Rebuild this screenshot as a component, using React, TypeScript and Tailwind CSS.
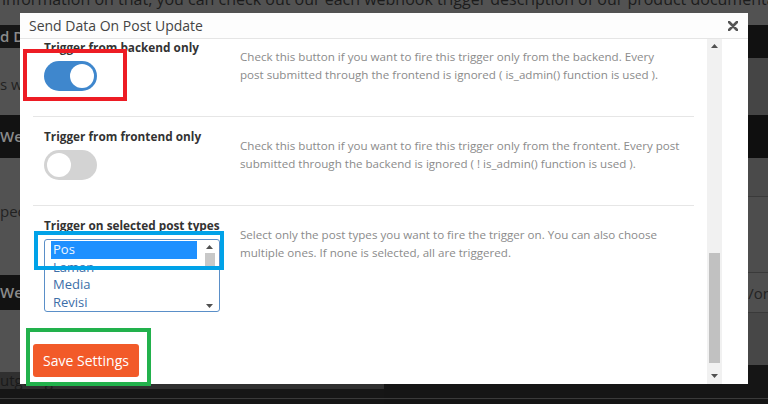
import React from "react";

const settings = [
  {
    id: "backend",
    label: "Trigger from backend only",
    on: true,
    lines: [
      "Check this button if you want to fire this trigger only from the backend. Every",
      "post submitted through the frontend is ignored ( is_admin() function is used ).",
    ],
  },
  {
    id: "frontend",
    label: "Trigger from frontend only",
    on: false,
    lines: [
      "Check this button if you want to fire this trigger only from the frontent. Every post",
      "submitted through the backend is ignored ( ! is_admin() function is used ).",
    ],
  },
];

const postTypes = ["Pos", "Laman", "Media", "Revisi"];

function Toggle({ on }: { on: boolean }) {
  return (
    <div
      className={`mt-[6px] flex h-[30px] w-[53px] items-center rounded-full p-[3px] ${
        on ? "justify-end bg-[#3f87cd]" : "justify-start bg-[#d3d3d3]"
      }`}
    >
      <div className="h-[24px] w-[24px] rounded-full bg-white" />
    </div>
  );
}

function ArrowUp({ className = "" }: { className?: string }) {
  return (
    <svg width="7" height="4" viewBox="0 0 7 4" className={className}>
      <path d="M0 4 L3.5 0 L7 4 Z" fill="#505050" />
    </svg>
  );
}

function ArrowDown({ className = "" }: { className?: string }) {
  return (
    <svg width="7" height="4" viewBox="0 0 7 4" className={className}>
      <path d="M0 0 L7 0 L3.5 4 Z" fill="#505050" />
    </svg>
  );
}

function Backdrop() {
  return (
    <div className="flex h-full flex-col">
      <div className="h-[25px] overflow-hidden whitespace-nowrap pl-[2px] text-[16px] leading-[16px] text-[#1c1c1c]">
        <div className="-mt-[9px]">
          information on that, you can check out our each webhook trigger description of our product
          documentation by clicking <span className="text-[#1d3d5c]">here</span>
        </div>
      </div>
      <div className="flex flex-1">
        <div className="flex w-1/2 flex-col whitespace-nowrap text-[15px]">
          <div className="flex h-[23px] items-center bg-[#161616] font-semibold text-[#8a8a8a]">
            d Data On Post Update
          </div>
          <div className="flex h-[67px] items-end pb-[20px] text-[#222]">s webhooks</div>
          <div className="flex h-[43px] items-center bg-[#121212] font-semibold text-[#8a8a8a]">
            Webhooks
          </div>
          <div className="flex h-[117px] items-start pt-[42px] text-[#222]">pecific</div>
          <div className="flex h-[35px] items-center bg-[#121212] font-semibold text-[#8a8a8a]">
            Webhooks
          </div>
          <div className="h-[62px]" />
          <div className="flex h-[17px] items-center bg-[#303030] text-[#1a1a1a]">utgoing</div>
          <div className="flex flex-1 flex-col bg-[#161616]">
            <div className="h-[9px]" />
            <div className="h-px bg-[#3a3a3a]" />
          </div>
        </div>
        <div className="flex w-1/2 flex-col">
          <div className="h-[33px] bg-[#111]" />
          <div className="h-[57px] bg-[#454545]" />
          <div className="h-[43px] bg-[#0f0f0f]" />
          <div className="h-[39px] border-b border-[#3a3a3a] bg-[#4a4a4a]" />
          <div className="h-[76px] border-b border-[#3a3a3a] bg-[#4d4d4d]" />
          <div className="flex h-[40px] items-end justify-end border-b border-[#3a3a3a] bg-[#4f4f4f] pb-[8px]">
            <span className="-mr-[4px] text-[15px] text-[#222]">/on</span>
          </div>
          <div className="h-[52px] bg-[#474747]" />
          <div className="flex flex-1 flex-col bg-[#151515]">
            <div className="h-[33px]" />
            <div className="h-px bg-[#3a3a3a]" />
          </div>
        </div>
      </div>
    </div>
  );
}

export default function App() {
  return (
    <div className="relative h-[404px] w-[768px] overflow-hidden bg-[#525252] font-['Open_Sans',sans-serif]">
      <Backdrop />

      <div className="absolute left-[20px] top-[13px] flex h-[371px] w-[728px] flex-col bg-white">
        <div className="flex h-[26px] shrink-0 items-center justify-between border-b border-[#e5e5e5] bg-[#fdfdfd] pl-[9px] pr-[7px]">
          <h2 className="text-[14px] text-[#444]">Send Data On Post Update</h2>
          <svg width="10" height="10" viewBox="0 0 10 10" className="mr-[3px]">
            <path d="M1 1 L9 9 M9 1 L1 9" stroke="#555" strokeWidth="2.6" strokeLinecap="round" />
          </svg>
        </div>

        <div className="flex min-h-0 flex-1 pl-[13px] pr-[26px]">
          <div className="flex-1 overflow-hidden pr-[13px]">
            {settings.map((s, i) => (
              <div
                key={s.id}
                className={`flex border-b border-[#e6e6e6] px-[11px] pb-[25px] ${i === 0 ? "pt-0" : "pt-[11px]"}`}
              >
                <div className="w-[196px] shrink-0">
                  <p className="text-[11.8px] font-bold leading-[16px] text-[#333]">{s.label}</p>
                  <Toggle on={s.on} />
                </div>
                <div className="pt-[9px] text-[11.6px] leading-[18px] text-[#8b8b8b]">
                  {s.lines.map((l) => (
                    <p key={l} className="whitespace-nowrap">
                      {l}
                    </p>
                  ))}
                </div>
              </div>
            ))}

            <div className="flex px-[11px] pt-[11px]">
              <div className="w-[196px] shrink-0">
                <p className="text-[11.8px] font-bold leading-[16px] text-[#333]">
                  Trigger on selected post types
                </p>
                <div className="mt-[6px] flex h-[73px] w-[176px] rounded-[3px] border border-[#5a8fc8] bg-white">
                  <div className="ml-[6px] w-[146px] pt-[1px]">
                    {postTypes.map((p, idx) => (
                      <div
                        key={p}
                        className={`flex h-[17.5px] items-center pl-[2px] text-[13px] ${
                          idx === 0 ? "bg-[#1e90ff] text-[#eef6ff]" : "text-[#3c6ea8]"
                        }`}
                      >
                        {p}
                      </div>
                    ))}
                  </div>
                  <div className="ml-[6px] flex w-[13px] flex-col items-center pb-[3px] pt-[5px]">
                    <ArrowUp />
                    <div className="mt-[4px] h-[15px] w-[10px] bg-[#c8c8c8]" />
                    <div className="flex-1" />
                    <ArrowDown />
                  </div>
                </div>
              </div>
              <div className="pt-[9px] text-[11.6px] leading-[18px] text-[#8b8b8b]">
                <p className="whitespace-nowrap">
                  Select only the post types you want to fire the trigger on. You can also choose
                </p>
                <p className="whitespace-nowrap">
                  multiple ones. If none is selected, all are triggered.
                </p>
              </div>
            </div>

            <button className="mt-[32px] h-[33px] w-[106px] rounded-[3px] bg-[#f25a29] text-[14px] text-white">
              Save Settings
            </button>
          </div>

          <div className="flex w-[15px] shrink-0 flex-col items-center bg-[#f1f1f1]">
            <ArrowUp className="mt-[5px]" />
            <div className="h-[205px]" />
            <div className="h-[110px] w-[11px] bg-[#c1c1c1]" />
            <div className="flex-1" />
            <ArrowDown className="mb-[6px]" />
          </div>
        </div>
      </div>

      <div className="pointer-events-none absolute left-[23px] top-[49px] h-[52px] w-[104px] border-[4px] border-[#ed1c24]" />
      <div className="pointer-events-none absolute left-[34px] top-[231px] h-[39px] w-[190px] border-[4px] border-[#00a2e8]" />
      <div className="pointer-events-none absolute left-[26px] top-[328px] h-[58px] w-[125px] border-[4px] border-[#22b14c]" />
    </div>
  );
}
